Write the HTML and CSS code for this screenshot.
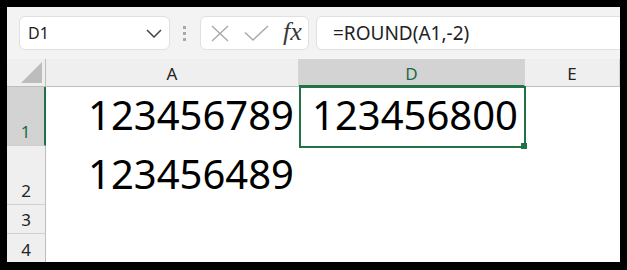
FILE: index.html
```html
<!DOCTYPE html>
<html lang="en">
<head>
  <meta charset="UTF-8">
  <title>ROUND to hundreds</title>
  <link rel="stylesheet" href="styles.css">
</head>
<body>
  <div class="app">
    <!-- Formula bar -->
    <div class="toolbar">
      <div class="name-box">
        <span>D1</span>
        <svg class="chevron" width="16" height="9" viewBox="0 0 16 9"><path d="M1 1 L8 8 L15 1" fill="none" stroke="#444" stroke-width="1.5"/></svg>
      </div>
      <div class="grip"><i></i><i></i><i></i></div>
      <div class="fx-box">
        <svg width="18" height="17" viewBox="0 0 18 17"><path d="M1 1 L17 16 M17 1 L1 16" stroke="#a9a9a9" stroke-width="1.4" fill="none"/></svg>
        <svg width="25" height="16" viewBox="0 0 25 16"><path d="M1 7.5 L9 15 L24 1" stroke="#a9a9a9" stroke-width="1.4" fill="none"/></svg>
        <span class="fx">fx</span>
      </div>
      <div class="formula">=ROUND(A1,-2)</div>
    </div>

    <!-- Sheet -->
    <div class="sheet">
      <div class="corner"></div>
      <div class="col-head">A</div>
      <div class="col-head selected">D</div>
      <div class="col-head">E</div>

      <div class="row-head selected">1</div>
      <div class="cell">123456789</div>
      <div class="cell active">123456800</div>
      <div class="cell"></div>

      <div class="row-head">2</div>
      <div class="cell">123456489</div>
      <div class="cell"></div>
      <div class="cell"></div>

      <div class="row-head">3</div>
      <div class="cell"></div>
      <div class="cell"></div>
      <div class="cell"></div>

      <div class="row-head">4</div>
      <div class="cell"></div>
      <div class="cell"></div>
      <div class="cell"></div>
    </div>
  </div>
</body>
</html>
```

FILE: styles.css
```css
body {
  margin: 0;
  background-color: #000;
  font-family: "Noto Sans", "Open Sans", sans-serif;
}
.app {
  margin: 7px 7px 0 7px;
  width: 613px;
  height: 255px;
  overflow: hidden;
  background: white;
}
.toolbar {
  height: 52px;
  background-color: #f3f3f3;
  display: flex;
  align-items: center;
  padding-left: 12px;
}
.name-box {
  height: 32px;
  width: 134px;
  background: white;
  border: 1px solid #e0e0e0;
  border-radius: 6px;
  display: flex;
  align-items: center;
  justify-content: space-between;
  padding: 0 7px 0 8px;
  font-size: 16px;
  color: #222;
}
.chevron {
  margin-top: 1px;
}
.grip {
  display: flex;
  flex-direction: column;
  gap: 3px;
  margin: 0 14px 0 13px;
}
.grip i {
  display: block;
  width: 3px;
  height: 3px;
  background: #a8a8a8;
}
.fx-box {
  width: 109px;
  height: 34px;
  box-sizing: border-box;
  background: white;
  border: 1px solid #e0e0e0;
  border-radius: 6px;
  display: flex;
  align-items: center;
  padding-left: 10px;
  gap: 15px;
}
.fx {
  font-family: "Liberation Serif", serif;
  font-style: italic;
  font-size: 26px;
  color: #3a3a3a;
  margin-top: -3px;
  margin-left: -1px;
}
.formula {
  flex: 1;
  height: 34px;
  box-sizing: border-box;
  margin-left: 7px;
  margin-right: -10px;
  background: white;
  border: 1px solid #e0e0e0;
  border-radius: 6px;
  display: flex;
  align-items: center;
  padding-left: 16px;
  font-size: 19px;
  color: #222;
}
.sheet {
  display: grid;
  grid-template-columns: 39px 253px 226px 95px;
  grid-template-rows: 28px 59px 59px 29px 30px;
}
.corner {
  background-color: #efefef;
  border-bottom: 1px solid #bdbdbd;
  border-right: 1px solid #bdbdbd;
  position: relative;
}
.corner::after {
  content: "";
  position: absolute;
  right: 3px;
  bottom: 3px;
  width: 21px;
  height: 21px;
  background: #bdbdbd;
  clip-path: polygon(100% 0, 100% 100%, 0 100%);
}
.col-head {
  background-color: #efefef;
  border-bottom: 1px solid #bdbdbd;
  border-right: 1px solid #d4d4d4;
  display: flex;
  align-items: center;
  justify-content: center;
  padding-top: 2px;
  font-size: 17px;
  line-height: 17px;
  color: #222;
}
.col-head:last-child {
  border-right: none;
}
.col-head.selected {
  background-color: #d3d3d3;
  border-bottom: 2px solid #217346;
  color: #1e6b41;
}
.row-head {
  background-color: #efefef;
  border-right: 1px solid #bdbdbd;
  border-bottom: 1px solid #d0d0d0;
  display: flex;
  align-items: flex-end;
  justify-content: center;
  padding-bottom: 5px;
  font-size: 17px;
  line-height: 17px;
  color: #222;
}
.row-head.selected {
  background-color: #d3d3d3;
  border-right: 2px solid #217346;
  color: #1e6b41;
}
.cell {
  display: flex;
  align-items: flex-end;
  justify-content: flex-end;
  padding: 0 5px 11px 0;
  font-size: 40px;
  line-height: 40px;
  color: #000;
  white-space: nowrap;
}
.cell.active {
  position: relative;
  padding-right: 7px;
}
.cell.active::before {
  content: "";
  position: absolute;
  top: -1px;
  left: 0;
  right: -1px;
  bottom: -2px;
  border: 2px solid #217346;
}
.cell.active::after {
  content: "";
  position: absolute;
  right: -2px;
  bottom: -3px;
  width: 6px;
  height: 6px;
  background: #217346;
}
```
